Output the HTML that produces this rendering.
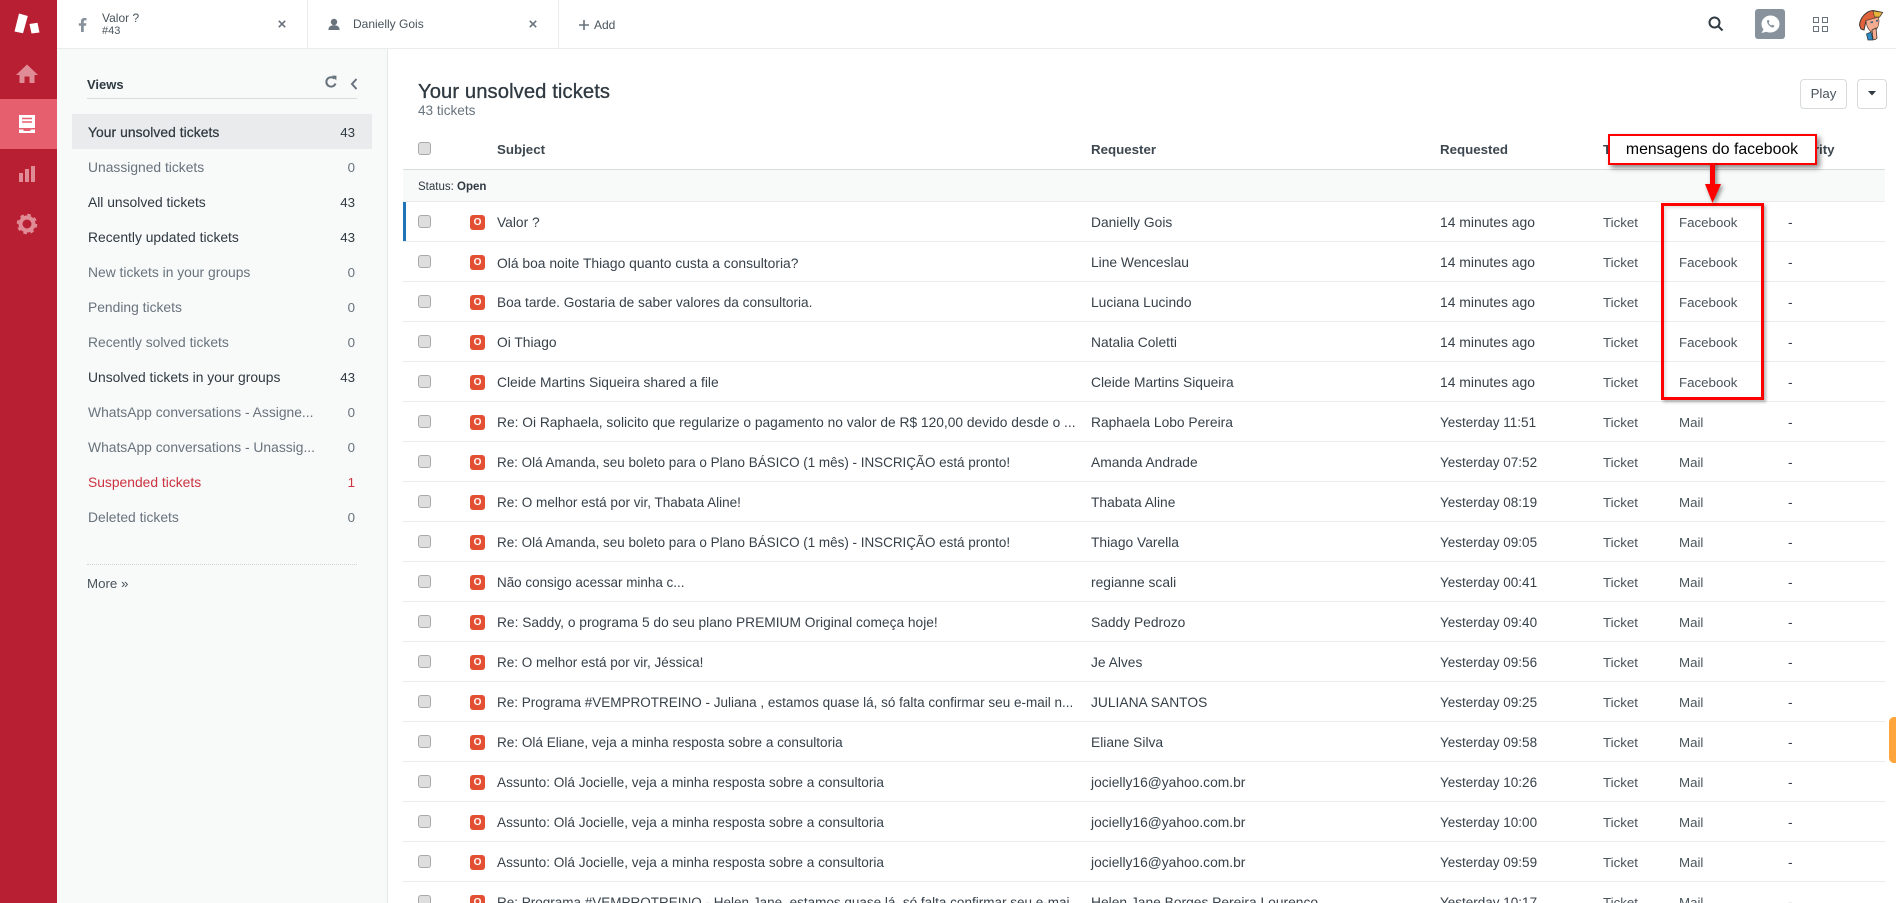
<!DOCTYPE html>
<html><head><meta charset="utf-8"><title>Tickets</title>
<style>
*{box-sizing:border-box}
html,body{margin:0;padding:0;width:1896px;height:903px;overflow:hidden;background:#fff;font-family:"Liberation Sans",Arial,sans-serif;color:#2f3941}
#wrap{position:relative;width:1896px;height:903px;overflow:hidden;background:#fff}
.a{position:absolute;white-space:nowrap}
#rail{left:0;top:0;width:57px;height:903px;background:#b91f32}
#act{left:0;top:99px;width:57px;height:50px;background:#e55f6e}
#top{left:57px;top:0;width:1839px;height:49px;border-bottom:1px solid #e9ebed;background:#fff}
#side{left:57px;top:49px;width:331px;height:854px;background:#f8f9f9;border-right:1px solid #e4e7e9}
.v{position:absolute;left:88px;font-size:13.85px;line-height:20px;color:#68737d;white-space:nowrap}
.v.d{color:#2f3941}.v.r{color:#cc3340}
.n{position:absolute;right:1541px;font-size:13.3px;line-height:20px;color:#68737d}
.n.d{color:#2f3941}.n.r{color:#cc3340}
.row{position:absolute;left:403px;width:1482px;height:40px;border-bottom:1px solid #e9ebed;font-size:13.8px;line-height:20px;color:#37414a}
.row span{position:absolute;top:11px;white-space:nowrap}
.s{left:94px}.q{left:688px}.t{left:1037px;font-size:13.5px}.row span.t.m{font-size:13.9px;top:10px}.y{left:1200px;color:#49545c;font-size:13.3px}.w{left:1276px;color:#49545c;font-size:13.3px}.p{left:1385px}
.cb{position:absolute;left:15px;top:13px;width:13px;height:13px;background:#dedede;border:1px solid #a8abad;border-radius:3px}
.b{position:absolute;left:67px;top:13px;width:15px;height:15px;background:#e34f32;border-radius:3px;color:#fff;font-size:10px;font-weight:bold;line-height:15px;text-align:center;font-style:normal}
.h{font-size:13.3px;font-weight:bold;color:#3d474f;line-height:20px}
</style></head><body><div id="wrap">
<div class="a" id="rail"></div><div class="a" id="act"></div>
<svg class="a" style="left:0;top:0" width="57" height="240" viewBox="0 0 57 240">
<path d="M19 13.500L27.800 16L23 33.300L14.500 31.500Z" fill="#fff"/><path d="M29.500 24L37.500 22.800L39.500 32.500L31.500 33.500Z" fill="#fff"/>
<path d="M27 64.500L16 75H19.500V83H24.500V76.500H29.500V83H34.500V75H38L27 64.500Z" fill="#e08c97"/>
<path d="M19 115H35V128H19Z" fill="#fff"/><path d="M22 118.500H32M22 122H32" stroke="#e55f6e" stroke-width="1.500"/><path d="M19 129.500V133H35V129.500H30.500V131H23.500V129.500Z" fill="#fff"/>
<path d="M19 173H23V182H19ZM25 169H29V182H25ZM31 166H35V182H31Z" fill="#e08c97"/>
<circle cx="27" cy="224" r="6.500" fill="none" stroke="#e08c97" stroke-width="4"/><circle cx="27" cy="224" r="9" fill="none" stroke="#e08c97" stroke-width="2.500" stroke-dasharray="3.500 3.570"/>
</svg>
<div class="a" id="top"></div>
<div class="a" style="left:307px;top:0;width:1px;height:48px;background:#e9ebed"></div>
<div class="a" style="left:558px;top:0;width:1px;height:48px;background:#e9ebed"></div>
<svg class="a" style="left:78px;top:18px" width="9" height="14" viewBox="0 0 9 14"><path d="M3 14V7.800H.800V5.300H3V3.300C3 1.200 4.200 0 6.200 0H8.500V2.400H7C6.100 2.400 5.800 2.800 5.800 3.600V5.300H8.400L8 7.800H5.800V14Z" fill="#87929d"/></svg>
<div class="a" style="left:102px;top:11px;font-size:12px;line-height:14px;color:#49545c">Valor ?</div>
<div class="a" style="left:102px;top:24px;font-size:11px;line-height:14px;color:#49545c">#43</div>
<svg class="a" style="left:278px;top:20px" width="8" height="8" viewBox="0 0 10 10"><path d="M1 1L9 9M9 1L1 9" stroke="#68737d" stroke-width="2"/></svg>
<svg class="a" style="left:328px;top:18px" width="12" height="12" viewBox="0 0 14 15"><circle cx="7" cy="5" r="4" fill="#68737d"/><path d="M0 15C0 10.500 3 9 7 9S14 10.500 14 15Z" fill="#68737d"/></svg>
<div class="a" style="left:353px;top:17px;font-size:12px;line-height:15px;color:#49545c">Danielly Gois</div>
<svg class="a" style="left:529px;top:20px" width="8" height="8" viewBox="0 0 10 10"><path d="M1 1L9 9M9 1L1 9" stroke="#68737d" stroke-width="2"/></svg>
<svg class="a" style="left:579px;top:20px" width="10" height="10" viewBox="0 0 10 10"><path d="M5 0V10M0 5H10" stroke="#68737d" stroke-width="1.600"/></svg>
<div class="a" style="left:594px;top:18px;font-size:12px;line-height:15px;color:#49545c">Add</div>
<svg class="a" style="left:1708px;top:16px" width="16" height="16" viewBox="0 0 16 16"><circle cx="6.500" cy="6.500" r="5" fill="none" stroke="#2f3941" stroke-width="2"/><path d="M10 10L14.500 14.500" stroke="#2f3941" stroke-width="2"/></svg>
<div class="a" style="left:1755px;top:9px;width:30px;height:30px;background:#87929d;border-radius:3px"></div>
<svg class="a" style="left:1755px;top:9px" width="30" height="30" viewBox="0 0 30 30"><path d="M15.500 6.500C10.500 6.500 6.500 10.300 6.500 15C6.500 17 7.200 18.800 8.500 20.200L6.500 24L11.500 22.700C12.700 23.200 14 23.500 15.500 23.500C20.500 23.500 24.500 19.700 24.500 15S20.500 6.500 15.500 6.500Z" fill="#fff"/><path d="M12 11.500C11.500 14.500 15.500 19 18.500 18.500L19.500 16.800L17.300 15.700L16.300 16.500C15 16 14.200 15 13.700 13.800L14.500 12.800L13.500 10.700Z" fill="#87929d"/></svg>
<svg class="a" style="left:1813px;top:17px" width="15" height="15" viewBox="0 0 15 15"><path d="M.500.500H5.500V5.500H.500ZM9.500.500H14.500V5.500H9.500ZM.500 9.500H5.500V14.500H.500ZM9.500 9.500H14.500V14.500H9.500Z" fill="none" stroke="#68737d"/></svg>
<svg class="a" style="left:1858px;top:9px" width="26" height="32" viewBox="0 0 26 32">
<path d="M1.500 16C2 9 8 2 15 1.500L24.500 3.500L21.500 8L8 12L6 21L3 20Z" fill="#e0623a" stroke="#3d3632"/>
<path d="M15 2L24.500 3.500L21.500 8L16.500 8Z" fill="#e8b53a" stroke="#3d3632" stroke-width=".6"/>
<path d="M8 11.500L20.500 8C21.500 13 20.500 18 18 21L13 23C10 20 8 16 8 11.500Z" fill="#f4ab90" stroke="#5a4036" stroke-width=".7"/>
<path d="M12.500 13.500L15 13M18 12L20 11.500" stroke="#2f5f7a" stroke-width="1.500"/>
<path d="M8.500 25L13 23L15 31L10 31Z" fill="#2d8ac4" stroke="#2f3941" stroke-width=".8"/>
<path d="M14 21L18 19L19 29C17.500 31 15.500 31 15 30Z" fill="#f4ab90" stroke="#3d3632" stroke-width=".8"/>
</svg>
<div class="a" id="side"></div>
<div class="a" style="left:87px;top:76px;font-size:13px;line-height:17px;font-weight:bold;color:#2f3941">Views</div>
<div class="a" style="left:87px;top:98px;width:270px;height:1px;background:#d8dcde"></div>
<svg class="a" style="left:324px;top:75px" width="14" height="14" viewBox="0 0 14 14"><path d="M11.500 8.500A4.700 4.700 0 1 1 10.500 3.700" fill="none" stroke="#68737d" stroke-width="2"/><path d="M8 .500L12.500 0.800L12.300 5.500Z" fill="#68737d"/></svg>
<svg class="a" style="left:350px;top:78px" width="8" height="12" viewBox="0 0 8 12"><path d="M6.500 1L2 6L6.500 11" fill="none" stroke="#68737d" stroke-width="2"/></svg>
<div class="a" style="left:72px;top:114px;width:300px;height:35px;background:#e9ebed"></div>
<div class="v d" style="top:122px;-webkit-text-stroke:.25px #2f3941;letter-spacing:.05px">Your unsolved tickets</div><div class="n d" style="top:123px">43</div>
<div class="v" style="top:157px">Unassigned tickets</div><div class="n" style="top:158px">0</div>
<div class="v d" style="top:192px">All unsolved tickets</div><div class="n d" style="top:193px">43</div>
<div class="v d" style="top:227px">Recently updated tickets</div><div class="n d" style="top:228px">43</div>
<div class="v" style="top:262px">New tickets in your groups</div><div class="n" style="top:263px">0</div>
<div class="v" style="top:297px">Pending tickets</div><div class="n" style="top:298px">0</div>
<div class="v" style="top:332px">Recently solved tickets</div><div class="n" style="top:333px">0</div>
<div class="v d" style="top:367px">Unsolved tickets in your groups</div><div class="n d" style="top:368px">43</div>
<div class="v" style="top:402px">WhatsApp conversations - Assigne...</div><div class="n" style="top:403px">0</div>
<div class="v" style="top:437px">WhatsApp conversations - Unassig...</div><div class="n" style="top:438px">0</div>
<div class="v r" style="top:472px">Suspended tickets</div><div class="n r" style="top:473px">1</div>
<div class="v" style="top:507px">Deleted tickets</div><div class="n" style="top:508px">0</div>
<div class="a" style="left:87px;top:564px;width:270px;border-top:1px dotted #d0d4d7"></div>
<div class="a" style="left:87px;top:575px;font-size:13.300px;line-height:18px;color:#49545c">More »</div>
<div class="a" style="left:418px;top:81px;font-size:20.200px;line-height:22px;-webkit-text-stroke:.3px #2f3941;letter-spacing:.1px;color:#2f3941">Your unsolved tickets</div>
<div class="a" style="left:418px;top:103px;font-size:13.600px;line-height:16px;color:#68737d">43 tickets</div>
<div class="a" style="left:1800px;top:79px;width:47px;height:30px;border:1px solid #d8dcde;border-radius:4px;font-size:13.300px;line-height:28px;text-align:center;color:#49545c">Play</div>
<div class="a" style="left:1857px;top:79px;width:30px;height:30px;border:1px solid #d8dcde;border-radius:4px"></div>
<svg class="a" style="left:1868px;top:91px" width="8" height="5" viewBox="0 0 8 5"><path d="M0 0H8L4 4.500Z" fill="#2f3941"/></svg>
<div class="a" style="left:418px;top:142px;width:13px;height:13px;background:#dedede;border:1px solid #a8abad;border-radius:3px"></div>
<div class="a h" style="left:497px;top:140px">Subject</div>
<div class="a h" style="left:1091px;top:140px">Requester</div>
<div class="a h" style="left:1440px;top:140px">Requested</div>
<div class="a h" style="left:1603px;top:140px">Type</div>
<div class="a h" style="left:1788px;top:140px">Priority</div>
<div class="a" style="left:403px;top:169px;width:1482px;height:33px;background:#f8f9f9;border-top:1px solid #d8dcde;border-bottom:1px solid #e9ebed"></div>
<div class="a" style="left:418px;top:180px;font-size:11.500px;line-height:15px;color:#2f3941">Status: <b style="font-weight:bold;color:#2f3941">Open</b></div>
<div class="a" style="left:403px;top:202px;width:3px;height:39px;background:#1f73b7"></div>

<div class="row" style="top:202px"><i class="cb"></i><i class="b">O</i><span class="s">Valor ?</span><span class="q">Danielly Gois</span><span class="t m">14 minutes ago</span><span class="y">Ticket</span><span class="w">Facebook</span><span class="p">-</span></div>
<div class="row" style="top:242px"><i class="cb"></i><i class="b">O</i><span class="s" style="font-size:13.85px">Olá boa noite Thiago quanto custa a consultoria?</span><span class="q">Line Wenceslau</span><span class="t m">14 minutes ago</span><span class="y">Ticket</span><span class="w">Facebook</span><span class="p">-</span></div>
<div class="row" style="top:282px"><i class="cb"></i><i class="b">O</i><span class="s" style="font-size:13.65px">Boa tarde. Gostaria de saber valores da consultoria.</span><span class="q">Luciana Lucindo</span><span class="t m">14 minutes ago</span><span class="y">Ticket</span><span class="w">Facebook</span><span class="p">-</span></div>
<div class="row" style="top:322px"><i class="cb"></i><i class="b">O</i><span class="s">Oi Thiago</span><span class="q">Natalia Coletti</span><span class="t m">14 minutes ago</span><span class="y">Ticket</span><span class="w">Facebook</span><span class="p">-</span></div>
<div class="row" style="top:362px"><i class="cb"></i><i class="b">O</i><span class="s">Cleide Martins Siqueira shared a file</span><span class="q">Cleide Martins Siqueira</span><span class="t m">14 minutes ago</span><span class="y">Ticket</span><span class="w">Facebook</span><span class="p">-</span></div>
<div class="row" style="top:402px"><i class="cb"></i><i class="b">O</i><span class="s" style="font-size:13.77px">Re: Oi Raphaela, solicito que regularize o pagamento no valor de R$ 120,00 devido desde o ...</span><span class="q">Raphaela Lobo Pereira</span><span class="t">Yesterday 11:51</span><span class="y">Ticket</span><span class="w">Mail</span><span class="p">-</span></div>
<div class="row" style="top:442px"><i class="cb"></i><i class="b">O</i><span class="s" style="font-size:13.45px">Re: Olá Amanda, seu boleto para o Plano BÁSICO (1 mês) - INSCRIÇÃO está pronto!</span><span class="q">Amanda Andrade</span><span class="t">Yesterday 07:52</span><span class="y">Ticket</span><span class="w">Mail</span><span class="p">-</span></div>
<div class="row" style="top:482px"><i class="cb"></i><i class="b">O</i><span class="s" style="font-size:13.53px">Re: O melhor está por vir, Thabata Aline!</span><span class="q">Thabata Aline</span><span class="t">Yesterday 08:19</span><span class="y">Ticket</span><span class="w">Mail</span><span class="p">-</span></div>
<div class="row" style="top:522px"><i class="cb"></i><i class="b">O</i><span class="s" style="font-size:13.45px">Re: Olá Amanda, seu boleto para o Plano BÁSICO (1 mês) - INSCRIÇÃO está pronto!</span><span class="q">Thiago Varella</span><span class="t">Yesterday 09:05</span><span class="y">Ticket</span><span class="w">Mail</span><span class="p">-</span></div>
<div class="row" style="top:562px"><i class="cb"></i><i class="b">O</i><span class="s" style="font-size:13.45px">Não consigo acessar minha c...</span><span class="q">regianne scali</span><span class="t">Yesterday 00:41</span><span class="y">Ticket</span><span class="w">Mail</span><span class="p">-</span></div>
<div class="row" style="top:602px"><i class="cb"></i><i class="b">O</i><span class="s" style="font-size:13.75px">Re: Saddy, o programa 5 do seu plano PREMIUM Original começa hoje!</span><span class="q">Saddy Pedrozo</span><span class="t">Yesterday 09:40</span><span class="y">Ticket</span><span class="w">Mail</span><span class="p">-</span></div>
<div class="row" style="top:642px"><i class="cb"></i><i class="b">O</i><span class="s" style="font-size:13.5px">Re: O melhor está por vir, Jéssica!</span><span class="q">Je Alves</span><span class="t">Yesterday 09:56</span><span class="y">Ticket</span><span class="w">Mail</span><span class="p">-</span></div>
<div class="row" style="top:682px"><i class="cb"></i><i class="b">O</i><span class="s" style="font-size:13.5px">Re: Programa #VEMPROTREINO - Juliana , estamos quase lá, só falta confirmar seu e-mail n...</span><span class="q">JULIANA SANTOS</span><span class="t">Yesterday 09:25</span><span class="y">Ticket</span><span class="w">Mail</span><span class="p">-</span></div>
<div class="row" style="top:722px"><i class="cb"></i><i class="b">O</i><span class="s" style="font-size:13.56px">Re: Olá Eliane, veja a minha resposta sobre a consultoria</span><span class="q">Eliane Silva</span><span class="t">Yesterday 09:58</span><span class="y">Ticket</span><span class="w">Mail</span><span class="p">-</span></div>
<div class="row" style="top:762px"><i class="cb"></i><i class="b">O</i><span class="s" style="font-size:13.63px">Assunto: Olá Jocielle, veja a minha resposta sobre a consultoria</span><span class="q">jocielly16@yahoo.com.br</span><span class="t">Yesterday 10:26</span><span class="y">Ticket</span><span class="w">Mail</span><span class="p">-</span></div>
<div class="row" style="top:802px"><i class="cb"></i><i class="b">O</i><span class="s" style="font-size:13.63px">Assunto: Olá Jocielle, veja a minha resposta sobre a consultoria</span><span class="q">jocielly16@yahoo.com.br</span><span class="t">Yesterday 10:00</span><span class="y">Ticket</span><span class="w">Mail</span><span class="p">-</span></div>
<div class="row" style="top:842px"><i class="cb"></i><i class="b">O</i><span class="s" style="font-size:13.63px">Assunto: Olá Jocielle, veja a minha resposta sobre a consultoria</span><span class="q">jocielly16@yahoo.com.br</span><span class="t">Yesterday 09:59</span><span class="y">Ticket</span><span class="w">Mail</span><span class="p">-</span></div>
<div class="row" style="top:882px"><i class="cb"></i><i class="b">O</i><span class="s" style="font-size:13.5px">Re: Programa #VEMPROTREINO - Helen Jane, estamos quase lá, só falta confirmar seu e-mai...</span><span class="q">Helen Jane Borges Pereira Lourenço</span><span class="t">Yesterday 10:17</span><span class="y">Ticket</span><span class="w">Mail</span><span class="p">-</span></div>

<div class="a" style="left:1889px;top:717px;width:7px;height:46px;background:#ffa53c;border-radius:5px 0 0 5px"></div>
<div class="a" style="left:1661px;top:203px;width:103px;height:197px;border:3px solid #f00;box-shadow:2px 2px 3px rgba(0,0,0,.3),inset 2px 2px 3px rgba(0,0,0,.12)"></div>
<div class="a" style="left:1608px;top:134px;width:209px;height:31px;background:#fff;border:2px solid #f00;box-shadow:3px 3px 5px rgba(0,0,0,.45);font-size:15.800px;line-height:27px;text-align:center;color:#000;padding-right:1px">mensagens do facebook</div>
<svg class="a" style="left:1700px;top:160px;overflow:visible" width="30" height="46" viewBox="0 0 30 46"><path d="M10 3H15V24H21L12.500 43L5 24H10Z" fill="#f00" style="filter:drop-shadow(2px 2px 2px rgba(0,0,0,.45))"/></svg>
</div></body></html>
